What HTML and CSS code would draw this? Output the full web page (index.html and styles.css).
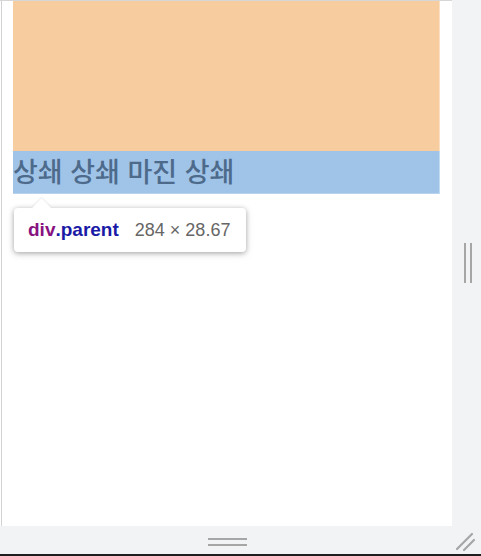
FILE: index.html
```html
<!DOCTYPE html>
<html lang="ko">
<head>
<meta charset="utf-8">
<title>Inspect</title>
<link rel="stylesheet" href="styles.css">
</head>
<body>
<div class="shell">
  <div class="top-row">
    <div class="viewport">
      <div class="child"></div>
      <div class="parent">상쇄 상쇄 마진 상쇄</div>
      <div class="tooltip">
        <span class="tag">div</span><span class="cls">.parent</span>
        <span class="dims">284 × 28.67</span>
      </div>
    </div>
    <div class="side-gutter">
      <div class="v-handle"><span></span><span></span></div>
    </div>
  </div>
  <div class="bottom-gutter">
    <div class="h-handle"><span></span><span></span></div>
    <svg class="corner" width="22" height="22" viewBox="0 0 22 22">
      <line x1="2" y1="19" x2="17" y2="4" stroke="#a6a6a6" stroke-width="2.2" stroke-linecap="round"/>
      <line x1="9" y1="20" x2="19" y2="10" stroke="#a6a6a6" stroke-width="2.2" stroke-linecap="round"/>
    </svg>
  </div>
  <div class="bottom-edge"></div>
</div>
</body>
</html>
```

FILE: styles.css
```css
html, body {
  margin: 0;
  padding: 0;
  background: #ffffff;
}
.shell {
  width: 481px;
  height: 556px;
  display: flex;
  flex-direction: column;
  overflow: hidden;
}
.top-row {
  display: flex;
  height: 526px;
}
.viewport {
  position: relative;
  width: 452px;
  box-sizing: border-box;
  border-top: 1px solid #d6d6d6;
  background: linear-gradient(to right, #ffffff 1px, #d2d2d2 1px, #d2d2d2 2px, #ffffff 2px);
  padding-left: 13px;
}
.child {
  width: 426px;
  height: 150px;
  background: #f7cc9e;
  border-right: 1px solid #fbe0c4;
}
.parent {
  width: 427px;
  height: 43px;
  box-sizing: border-box;
  background: #a0c4e8;
  border-right: 1px solid #c4dcf1;
  border-bottom: 1px solid #b7d3ee;
  color: #4d6a8b;
  font-family: "Noto Sans CJK KR", sans-serif;
  font-weight: 500;
  font-size: 27px;
  line-height: 39px;
  white-space: nowrap;
}
.tooltip {
  position: absolute;
  left: 14px;
  top: 207px;
  width: 232px;
  height: 44px;
  box-sizing: border-box;
  background: #ffffff;
  border-radius: 4px;
  box-shadow: 0 1px 5px rgba(0,0,0,0.28), 0 2px 8px rgba(0,0,0,0.12);
  padding-left: 14px;
  display: flex;
  align-items: center;
  font-family: "Liberation Sans", Arial, sans-serif;
  white-space: nowrap;
}
.tooltip::before {
  content: "";
  position: absolute;
  left: 21px;
  top: -7px;
  width: 13px;
  height: 13px;
  background: #ffffff;
  transform: rotate(45deg);
  box-shadow: -1px -1px 2px rgba(0,0,0,0.08);
}
.tag, .cls {
  position: relative;
  font-weight: bold;
  font-size: 19px;
}
.tag { color: #881280; }
.cls { color: #1a1aa6; }
.dims {
  position: relative;
  margin-left: 16px;
  font-size: 18px;
  color: #666666;
}
.side-gutter {
  flex: 1;
  background: #f1f3f4;
  display: flex;
  align-items: flex-start;
  justify-content: center;
  padding-top: 243px;
}
.v-handle {
  display: flex;
  gap: 4px;
  margin-left: 2px;
}
.v-handle span {
  width: 2px;
  height: 40px;
  background: #a6a6a6;
}
.bottom-gutter {
  position: relative;
  height: 28px;
  background: #f1f3f4;
  display: flex;
  justify-content: center;
}
.h-handle {
  display: flex;
  flex-direction: column;
  gap: 4px;
  padding-top: 12px;
  margin-left: -27px;
}
.h-handle span {
  width: 39px;
  height: 2px;
  background: #a6a6a6;
}
.corner {
  position: absolute;
  right: 4px;
  top: 4px;
}
.bottom-edge {
  height: 2px;
  background: #1e1e1e;
}
```
